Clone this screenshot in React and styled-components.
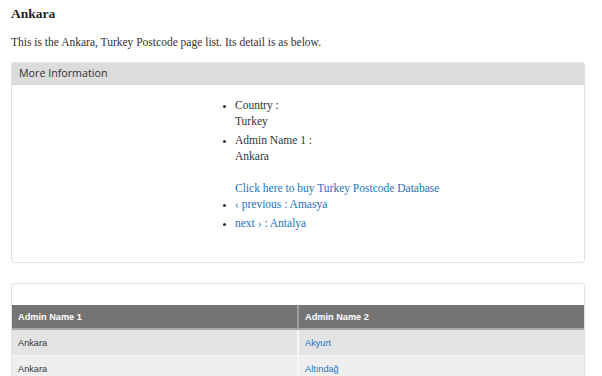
import React from "react";
import styled, { createGlobalStyle } from "styled-components";

const Global = createGlobalStyle`
  html, body { margin: 0; padding: 0; background: #fff; }
  body { font-family: "Liberation Serif", Georgia, serif; color: #333; }
`;

const Page = styled.div`
  width: 574px;
  margin-left: 11px;
`;

const Title = styled.h1`
  margin: 0;
  padding-top: 5px;
  font-size: 13.5px;
  line-height: 17px;
  font-weight: bold;
  color: #222;
`;

const Intro = styled.p`
  margin: 12px 0 12px;
  font-size: 11.5px;
  line-height: 16px;
`;

const Panel = styled.section`
  border: 1px solid #e3e3e3;
  border-radius: 3px;
  background: #fff;
  margin-bottom: 20px;
  overflow: hidden;
`;

const PanelHead = styled.div`
  background: #dcdcdc;
  height: 21px;
  padding: 0 7px;
  font-family: "Open Sans", "DejaVu Sans", sans-serif;
  font-size: 10.7px;
  line-height: 21px;
  color: #333;
  border-bottom: 1px solid #d2d2d2;
`;

const PanelBody = styled.div`
  padding: 12px 0 31px 213px;
  font-size: 11.5px;
  line-height: 16px;
`;

const List = styled.ul`
  margin: 0;
  padding: 0 0 0 10px;
  list-style: disc;
`;

const Item = styled.li`
  margin-bottom: ${(p) => (p.$tight ? "0" : "3px")};
  &::marker { font-size: 9px; }
`;

const Link = styled.a`
  color: #1c74bd;
  text-decoration: none;
`;

const BuyLine = styled.div`
  padding-top: 16px;
`;

const TablePanel = styled.section`
  border: 1px solid #e3e3e3;
  border-radius: 3px;
  padding-top: 21px;
  background: #fff;
`;

const Table = styled.table`
  width: 100%;
  border-collapse: collapse;
  font-family: "Liberation Sans", Arial, sans-serif;
  font-size: 9.2px;
`;

const Th = styled.th`
  background: #747474;
  color: #fff;
  text-align: left;
  font-weight: bold;
  height: 23px;
  padding: 0 6px;
  border-bottom: 2px solid #a9a9a9;
  border-left: ${(p) => (p.$first ? "none" : "2px solid #9c9c9c")};
  width: 50%;
`;

const Td = styled.td`
  background: ${(p) => (p.$odd ? "#e4e4e4" : "#efefef")};
  height: 25px;
  padding: 0 6px;
  color: #333;
  border-left: ${(p) => (p.$first ? "none" : "2px solid #f6f6f6")};
  border-bottom: 1px solid #f4f4f4;
`;

const rows = [
  ["Ankara", "Akyurt"],
  ["Ankara", "Altındağ"],
];

export default function App() {
  return (
    <Page>
      <Global />
      <Title>Ankara</Title>
      <Intro>This is the Ankara, Turkey Postcode page list. Its detail is as below.</Intro>
      <Panel>
        <PanelHead>More Information</PanelHead>
        <PanelBody>
          <List>
            <Item>
              Country :<br />Turkey
            </Item>
            <Item $tight>
              Admin Name 1 :<br />Ankara
            </Item>
          </List>
          <List as="div">
            <BuyLine>
              <Link href="#">Click here to buy Turkey Postcode Database</Link>
            </BuyLine>
          </List>
          <List>
            <Item>
              <Link href="#">‹ previous : Amasya</Link>
            </Item>
            <Item $tight>
              <Link href="#">next › : Antalya</Link>
            </Item>
          </List>
        </PanelBody>
      </Panel>
      <TablePanel>
        <Table>
          <thead>
            <tr>
              <Th $first>Admin Name 1</Th>
              <Th>Admin Name 2</Th>
            </tr>
          </thead>
          <tbody>
            {rows.map((r, i) => (
              <tr key={i}>
                <Td $first $odd={i % 2 === 0}>{r[0]}</Td>
                <Td $odd={i % 2 === 0}>
                  <Link href="#">{r[1]}</Link>
                </Td>
              </tr>
            ))}
          </tbody>
        </Table>
      </TablePanel>
    </Page>
  );
}
